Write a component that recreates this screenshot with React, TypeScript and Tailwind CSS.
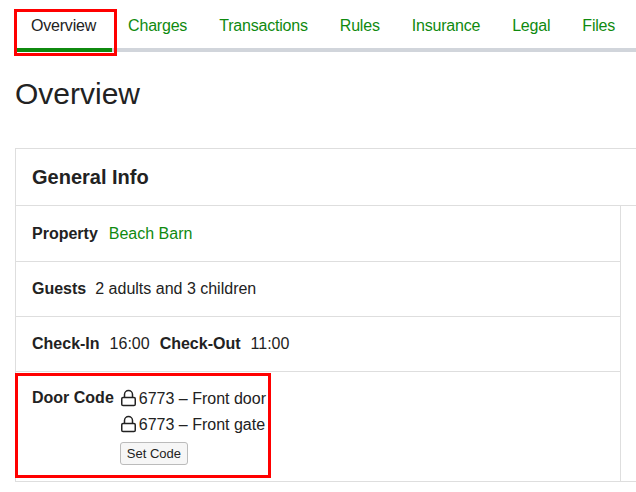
import React from "react";

const Lock = () => (
  <svg width="17" height="18" viewBox="0 0 17 18" fill="none" stroke="#222" strokeWidth="1.5" className="mr-[2px] -mt-[2px]">
    <path d="M4.5 8.5V5.5a4 4 0 0 1 8 0V8.5" />
    <rect x="1.75" y="8.5" width="13.5" height="8" rx="1.3" />
  </svg>
);

export default function App() {
  const tabs = ["Overview", "Charges", "Transactions", "Rules", "Insurance", "Legal", "Files"];
  return (
    <div className="w-[636px] h-[492px] overflow-hidden bg-white pl-[15px] text-[16px] text-[#222]" style={{ fontFamily: '"Liberation Sans", Arial, sans-serif' }}>
      <div className="flex border-b-4 border-[#d1d5db] pt-[14px] whitespace-nowrap">
        {tabs.map((t, i) => (
          <div key={t} className={`relative px-4 pb-[10px] -mb-1 border-b-4 tracking-[-0.2px] ${i === 0 ? "border-[#0f8a0f] text-[#222]" : "border-transparent text-[#0f8a0f]"}`}>
            {t}
            {i === 0 && <div className="absolute -left-[1px] -right-[5px] -top-[5px] -bottom-[8px] border-[3px] border-[#f00]" />}
          </div>
        ))}
      </div>
      <h1 className="text-[30px] mt-[24px] leading-[36px]">Overview</h1>
      <div className="mt-[36px] border border-[#dedede] border-r-0">
        <div className="h-[56px] px-4 flex items-center text-[20px] font-bold">General Info</div>
        <div className="border-t border-[#dedede] flex">
          <div className="w-[605px] border-r border-[#dedede]">
            <div className="h-[55px] px-4 flex items-center"><b className="mr-[11px]">Property</b><span className="text-[#0f8a0f]">Beach Barn</span></div>
            <div className="h-[55px] px-4 flex items-center border-t border-[#dedede]"><b className="mr-[9px]">Guests</b>2 adults and 3 children</div>
            <div className="h-[55px] px-4 flex items-center border-t border-[#dedede]"><b className="mr-[10px]">Check-In</b>16:00<b className="ml-[10px] mr-[10px]">Check-Out</b>11:00</div>
            <div className="h-[110px] px-4 pt-[14px] flex border-t border-[#dedede] relative">
              <b className="mr-[6px]">Door Code</b>
              <div className="flex flex-col">
                <div className="flex items-center h-[26px]"><Lock />6773 – Front door</div>
                <div className="flex items-center h-[26px]"><Lock />6773 – Front gate</div>
                <button className="mt-[4px] self-start px-[6px] h-[23px] text-[13px] border border-[#bbb] rounded-[3px] bg-[#f6f6f6]">Set Code</button>
              </div>
              <div className="absolute left-[-1px] top-[1px] w-[256px] h-[105px] border-[3px] border-[#f00]" />
            </div>
          </div>
        </div>
      </div>
    </div>
  );
}
